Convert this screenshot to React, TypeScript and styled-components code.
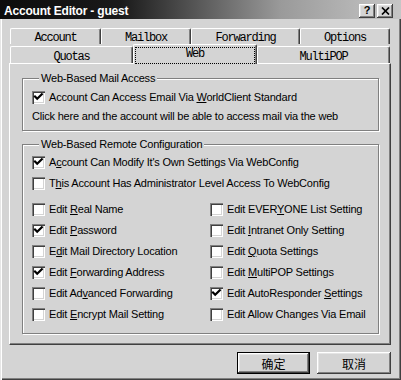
import React from "react";
import styled, { createGlobalStyle } from "styled-components";

const GlobalStyle = createGlobalStyle`
  html, body { margin: 0; padding: 0; background: #d4d4d4; }
  body { font-family: "Liberation Sans", Arial, sans-serif; font-size: 11px; color: #000; }
  * { box-sizing: border-box; }
`;

type Option = { label: string; checked?: boolean };

const rowOne = [
  { label: "Account", w: 91 },
  { label: "Mailbox", w: 90 },
  { label: "Forwarding", w: 109 },
  { label: "Options", w: 90 },
];

const rowTwo = [
  { label: "Quotas", w: 123 },
  { label: "Web", w: 124, active: true },
  { label: "MultiPOP", w: 133 },
];

const leftOptions: Option[] = [
  { label: "Edit &Real Name" },
  { label: "Edit &Password", checked: true },
  { label: "E&dit Mail Directory Location" },
  { label: "Edit &Forwarding Address", checked: true },
  { label: "Edit Ad&vanced Forwarding" },
  { label: "Edit &Encrypt Mail Setting" },
];

const rightOptions: Option[] = [
  { label: "Edit EVER&YONE List Setting" },
  { label: "Edit &Intranet Only Setting" },
  { label: "Edit &Quota Settings" },
  { label: "Edit &MultiPOP Settings" },
  { label: "Edit AutoResponder &Settings", checked: true },
  { label: "Edit Allow Changes Via Email" },
];

// "&" marks the mnemonic letter, windows style
const Mnemonic = ({ text }: { text: string }) => {
  const i = text.indexOf("&");
  if (i < 0) return <>{text}</>;
  return (
    <>
      {text.slice(0, i)}
      <u>{text[i + 1]}</u>
      {text.slice(i + 2)}
    </>
  );
};

const CheckRow = ({ label, checked }: Option) => (
  <Row>
    <Box>
      {checked && (
        <svg width="13" height="13" viewBox="0 0 13 13">
          <path d="M3 5.5 L5.2 7.8 L9.8 3.2" fill="none" stroke="#000" strokeWidth="2.2" strokeLinecap="square" />
        </svg>
      )}
    </Box>
    <Label>
      <Mnemonic text={label} />
    </Label>
  </Row>
);

export default function App() {
  return (
    <>
      <GlobalStyle />
      <Window>
        <TitleBar>
          <Title>Account Editor - guest</Title>
          <CaptionButton>?</CaptionButton>
          <CaptionButton>
            <svg width="9" height="8" viewBox="0 0 9 8">
              <path d="M1 0.5 L8 7.5 M8 0.5 L1 7.5" stroke="#000" strokeWidth="1.7" />
            </svg>
          </CaptionButton>
        </TitleBar>

        <Body>
          <TabStrip>
            <TabRow>
              {rowOne.map((t) => (
                <Tab key={t.label} $w={t.w}>
                  {t.label}
                </Tab>
              ))}
            </TabRow>
            <TabRow>
              {rowTwo.map((t) =>
                t.active ? (
                  <ActiveTab key={t.label} $w={t.w}>
                    <Focus>{t.label}</Focus>
                  </ActiveTab>
                ) : (
                  <Tab key={t.label} $w={t.w} $tall>
                    {t.label}
                  </Tab>
                )
              )}
            </TabRow>
          </TabStrip>

          <Panel>
            <Group>
              <Legend>Web-Based Mail Access</Legend>
              <GroupBody $rowH={19} $top={3}>
                <CheckRow label="Account Can Access Email Via &WorldClient Standard" checked />
                <Row>
                  <Label>Click here and the account will be able to access mail via the web</Label>
                </Row>
              </GroupBody>
            </Group>

            <Group $last>
              <Legend>Web-Based Remote Configuration</Legend>
              <GroupBody $rowH={21} $top={1}>
                <CheckRow label="A&ccount Can Modify It's Own Settings Via WebConfig" checked />
                <CheckRow label="T&his Account Has Administrator Level Access To WebConfig" />
                <OptionGrid>
                  {[...leftOptions, ...rightOptions].map((o) => (
                    <CheckRow key={o.label} {...o} />
                  ))}
                </OptionGrid>
              </GroupBody>
            </Group>
          </Panel>

          <ButtonRow>
            <Button $default>确定</Button>
            <Button $w={74}>取消</Button>
          </ButtonRow>
        </Body>
      </Window>
    </>
  );
}

const Window = styled.div`
  width: 401px;
  height: 380px;
  background: #d4d4d4;
  display: flex;
  flex-direction: column;
  overflow: hidden;
  box-shadow: inset 1px 0 #e6e6e6, inset 2px 0 #fff, inset -1px -1px #404040,
    inset -2px -2px #808080;
`;

const TitleBar = styled.div`
  height: 19px;
  flex: none;
  display: flex;
  align-items: center;
  gap: 2px;
  padding: 2px 8px 0 4px;
  background: linear-gradient(90deg, #0c0c0c 0%, #1a1a1a 30%, #9a9a9a 70%, #c6c6c6 100%);
`;

const Title = styled.div`
  flex: 1;
  color: #fff;
  font-weight: 700;
  font-size: 12px;
  letter-spacing: -0.2px;
  white-space: nowrap;
`;

const CaptionButton = styled.div`
  width: 16px;
  height: 14px;
  display: flex;
  align-items: center;
  justify-content: center;
  background: #d4d4d4;
  font-weight: 700;
  font-size: 11px;
  line-height: 1;
  box-shadow: inset -1px -1px #404040, inset 1px 1px #fff, inset -2px -2px #808080,
    inset 2px 2px #e4e4e4;
`;

const Body = styled.div`
  flex: 1;
  display: flex;
  flex-direction: column;
  padding: 9px 10px 0 9px;
`;

const TabStrip = styled.div`
  margin-left: 1px;
  width: 380px;
  display: flex;
  flex-direction: column;
`;

const TabRow = styled.div`
  display: flex;
  align-items: flex-end;
`;

const Tab = styled.div<{ $w: number; $tall?: boolean }>`
  width: ${(p) => p.$w}px;
  height: ${(p) => (p.$tall ? 17 : 16)}px;
  display: flex;
  align-items: center;
  justify-content: center;
  padding-top: ${(p) => (p.$tall ? 3 : 2)}px;
  font-family: "Liberation Mono", "Courier New", monospace;
  font-size: 12px;
  letter-spacing: -1.2px;
  background: #d4d4d4;
  border-top: 1px solid #fff;
  border-left: 1px solid #fff;
  border-right: 1px solid #404040;
  border-radius: 2px 2px 0 0;
  box-shadow: inset -1px 0 #808080;
`;

const ActiveTab = styled(Tab)`
  height: 20px;
  margin: 0 0 -1px;
  padding: 2px 1px 0;
  position: relative;
  z-index: 1;
  align-items: stretch;
`;

const Focus = styled.span`
  flex: 1;
  display: flex;
  align-items: center;
  justify-content: center;
  padding-bottom: 3px;
  border: 1px dotted #000;
`;

const Panel = styled.div`
  width: 382px;
  height: 282px;
  flex: none;
  padding: 8px 11px 0 12px;
  border-top: 1px solid #fff;
  border-left: 1px solid #fff;
  border-right: 1px solid #404040;
  border-bottom: 1px solid #404040;
  box-shadow: inset -1px -1px #808080;
`;

const Group = styled.fieldset<{ $last?: boolean }>`
  margin: 0 0 ${(p) => (p.$last ? 0 : 7)}px;
  padding: 0 8px ${(p) => (p.$last ? 8 : 4)}px 9px;
  min-width: 0;
  border: 1px solid #808080;
  box-shadow: 1px 1px 0 #fff, inset 1px 1px 0 #fff;
`;

const Legend = styled.legend`
  margin-left: 7px;
  padding: 0 2px;
  line-height: 13px;
  letter-spacing: -0.2px;
  background: #d4d4d4;
`;

const GroupBody = styled.div<{ $rowH: number; $top: number }>`
  display: flex;
  flex-direction: column;
  margin-top: ${(p) => p.$top}px;

  & > div {
    height: ${(p) => p.$rowH}px;
  }
`;

const Row = styled.div`
  display: flex;
  align-items: center;
  gap: 4px;
  white-space: nowrap;
`;

const Box = styled.div`
  width: 13px;
  height: 13px;
  flex: none;
  background: #fff;
  box-shadow: inset 1px 1px #808080, inset 2px 2px #404040, inset -1px -1px #fff,
    inset -2px -2px #d4d4d4;

  svg {
    display: block;
  }
`;

const Label = styled.span`
  line-height: 13px;
  letter-spacing: -0.2px;

  u {
    text-underline-offset: 1px;
  }
`;

const OptionGrid = styled.div`
  margin-top: 5px;
  display: grid;
  grid-template-columns: 178px 1fr;
  grid-template-rows: repeat(6, 21px);
  grid-auto-flow: column;

  && {
    height: auto;
  }
`;

const ButtonRow = styled.div`
  margin-top: 7px;
  display: flex;
  justify-content: flex-end;
  gap: 7px;
`;

const Button = styled.div<{ $default?: boolean; $w?: number }>`
  width: ${(p) => p.$w ?? 73}px;
  height: 22px;
  display: flex;
  align-items: center;
  justify-content: center;
  font-family: "Noto Sans CJK SC", "Liberation Sans", sans-serif;
  font-size: 12px;
  background: #d4d4d4;
  border: ${(p) => (p.$default ? "1px solid #000" : "none")};
  box-shadow: inset -1px -1px #404040, inset 1px 1px #fff, inset -2px -2px #808080,
    inset 2px 2px #e4e4e4;
`;
